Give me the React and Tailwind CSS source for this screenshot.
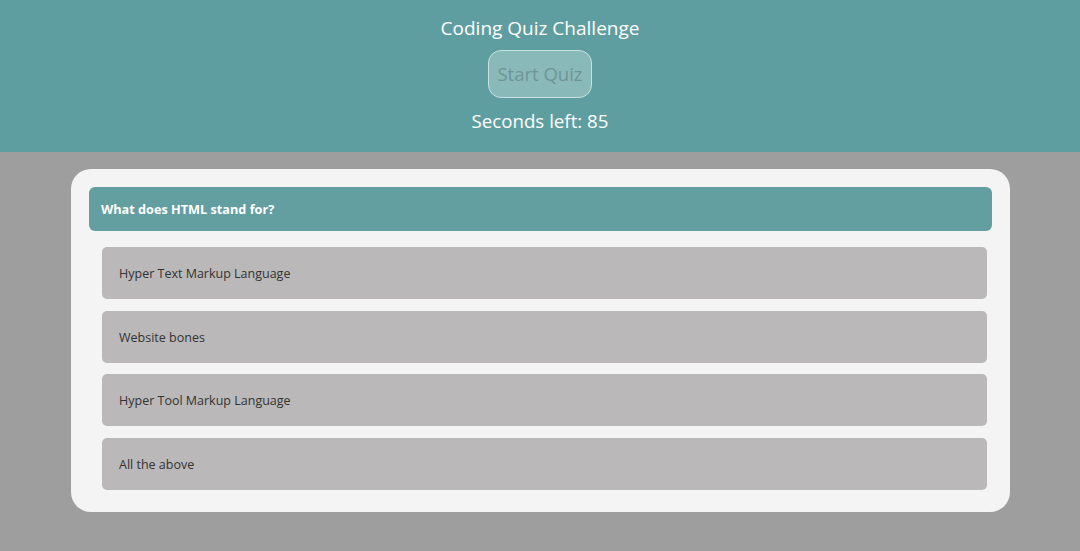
export default function App() {
  const answers = [
    "Hyper Text Markup Language",
    "Website bones",
    "Hyper Tool Markup Language",
    "All the above",
  ];

  return (
    <div
      className="min-h-[551px] bg-[#9e9e9e]"
      style={{ fontFamily: '"Open Sans", "Noto Sans", sans-serif' }}
    >
      {/* Header */}
      <header className="h-[152px] bg-[#5f9ea0] flex flex-col items-center pt-[14px] text-white">
        <h1 className="text-[19px] leading-[28px]">Coding Quiz Challenge</h1>
        <button className="mt-[8px] h-[48px] w-[104px] rounded-[13px] border border-[#c9e0e0] bg-[#8ab9ba] text-[18.5px] text-[#6e9596]">
          Start Quiz
        </button>
        <p className="mt-[9px] text-[18.7px] leading-[28px]">Seconds left: 85</p>
      </header>

      {/* Quiz card */}
      <main className="pt-[17px] px-[71px]">
        <div className="w-[939px] rounded-[20px] bg-[#f4f4f4] pt-[18px] pb-[22px] px-[18px]">
          <div className="h-[44px] rounded-[6px] bg-[#639fa0] flex items-center px-[12px] pt-[2px]">
            <span className="text-[12.7px] font-bold text-white">What does HTML stand for?</span>
          </div>
          <ul className="mt-[16px] ml-[13px] mr-[5px] flex flex-col gap-[11.5px]">
            {answers.map((a) => (
              <li
                key={a}
                className="h-[52px] rounded-[5px] bg-[#bab8b8] flex items-center px-[17px] pt-[3px] text-[12.5px] text-[#333333]"
              >
                {a}
              </li>
            ))}
          </ul>
        </div>
      </main>
    </div>
  );
}
